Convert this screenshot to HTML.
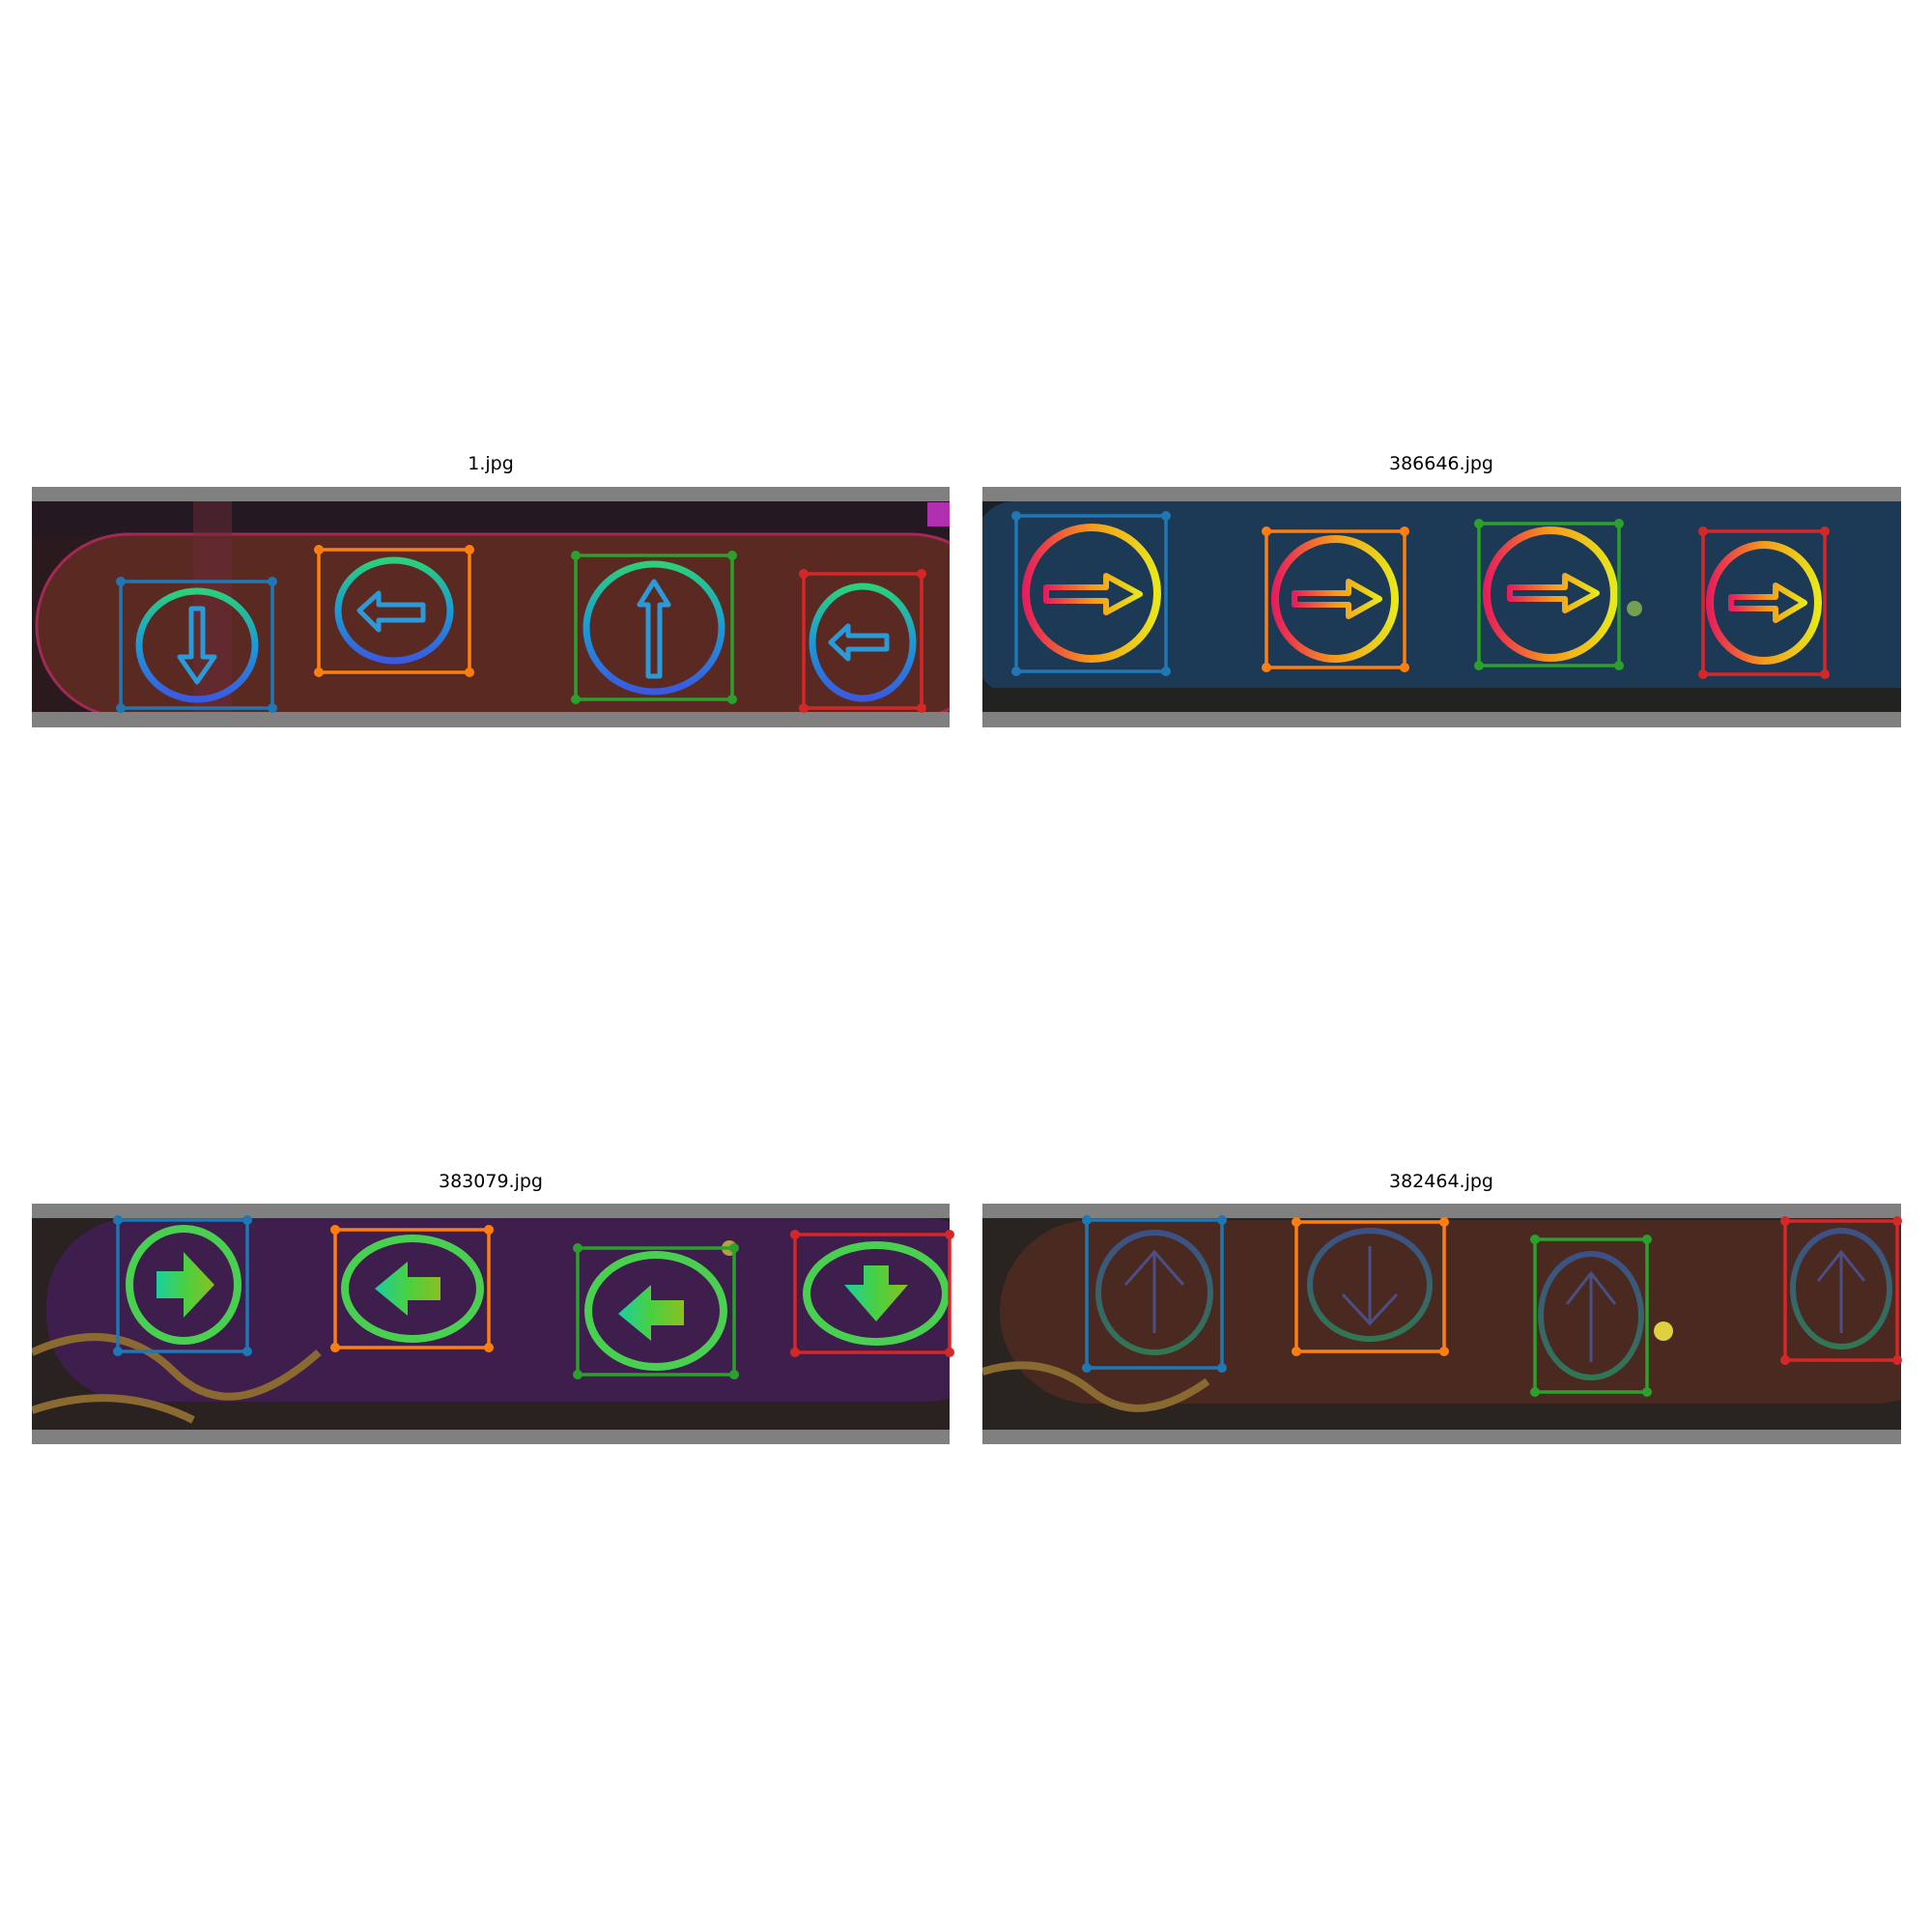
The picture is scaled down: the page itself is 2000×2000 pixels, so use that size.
<!DOCTYPE html>
<html><head><meta charset="utf-8"><style>html,body{margin:0;padding:0;background:#fff}svg{display:block}</style></head><body>
<svg width="2000" height="2000" viewBox="0 0 2000 2000" xmlns="http://www.w3.org/2000/svg" font-family="DejaVu Sans, Liberation Sans, sans-serif">
<defs>
<linearGradient id="gb" x1="0" y1="0" x2="0" y2="1"><stop offset="0" stop-color="#2bd07a"/><stop offset="0.5" stop-color="#1a9ad8"/><stop offset="1" stop-color="#3a5ae0"/></linearGradient>
<linearGradient id="gr" x1="0" y1="0" x2="1" y2="0"><stop offset="0" stop-color="#e81e5a"/><stop offset="0.5" stop-color="#f59a1a"/><stop offset="1" stop-color="#e8e81a"/></linearGradient>
<linearGradient id="gg" x1="0" y1="0" x2="1" y2="0"><stop offset="0" stop-color="#1ad0a0"/><stop offset="0.5" stop-color="#4ad040"/><stop offset="1" stop-color="#8ac020"/></linearGradient>
<linearGradient id="gd" x1="0" y1="0" x2="0" y2="1"><stop offset="0" stop-color="#3a5aa0"/><stop offset="1" stop-color="#2a8a60"/></linearGradient>
<clipPath id="c1"><rect x="33" y="519" width="950" height="218"/></clipPath>
<clipPath id="c2"><rect x="1017" y="519" width="951" height="218"/></clipPath>
<clipPath id="c3"><rect x="33" y="1261" width="950" height="219"/></clipPath>
<clipPath id="c4"><rect x="1017" y="1261" width="951" height="219"/></clipPath>
</defs>
<text x="508" y="486" font-size="19" text-anchor="middle" fill="#000">1.jpg</text>
<text x="1492" y="486" font-size="19" text-anchor="middle" fill="#000">386646.jpg</text>
<text x="508" y="1229" font-size="19" text-anchor="middle" fill="#000">383079.jpg</text>
<text x="1492" y="1229" font-size="19" text-anchor="middle" fill="#000">382464.jpg</text>

<rect x="33" y="504" width="950" height="249" fill="#808080"/>
<g clip-path="url(#c1)">
<rect x="33" y="519" width="950" height="218" fill="#2a1a1e"/>
<rect x="33" y="519" width="950" height="35" fill="#241822"/>
<rect x="38" y="553" width="1000" height="190" rx="95" fill="#5a2a22" stroke="#a02a55" stroke-width="3"/>
<rect x="960" y="520" width="30" height="25" fill="#b030b0"/>
<rect x="200" y="519" width="40" height="218" fill="#6a2a35" opacity="0.5"/>
</g>
<g fill="none" stroke-width="7">
<ellipse cx="204" cy="668" rx="60" ry="56" stroke="url(#gb)"/>
<ellipse cx="408" cy="632" rx="58" ry="52" stroke="url(#gb)"/>
<ellipse cx="677" cy="650" rx="70" ry="66" stroke="url(#gb)"/>
<ellipse cx="893" cy="665" rx="52" ry="58" stroke="url(#gb)"/>
</g>
<g fill="none" stroke="#2a9ad8" stroke-width="5" stroke-linejoin="round">
<path d="M198 630 H210 V680 H222 L204 706 L186 680 H198 Z"/>
<path d="M372 632 L392 614 V626 H438 V642 H392 V652 Z"/>
<path d="M677 602 L692 626 H683 V700 H671 V626 H662 Z"/>
<path d="M860 665 L878 648 V658 H918 V672 H878 V682 Z"/>
</g>
<g fill="none" stroke-width="3.5">
<rect x="125" y="602" width="157" height="131" stroke="#1f77b4"/>
<rect x="330" y="569" width="156" height="127" stroke="#ff7f0e"/>
<rect x="596" y="575" width="162" height="149" stroke="#2ca02c"/>
<rect x="832" y="594" width="122" height="139" stroke="#d62728"/>
</g>
<g fill="#1f77b4"><circle cx="125" cy="602" r="5"/><circle cx="282" cy="602" r="5"/><circle cx="125" cy="733" r="5"/><circle cx="282" cy="733" r="5"/></g>
<g fill="#ff7f0e"><circle cx="330" cy="569" r="5"/><circle cx="486" cy="569" r="5"/><circle cx="330" cy="696" r="5"/><circle cx="486" cy="696" r="5"/></g>
<g fill="#2ca02c"><circle cx="596" cy="575" r="5"/><circle cx="758" cy="575" r="5"/><circle cx="596" cy="724" r="5"/><circle cx="758" cy="724" r="5"/></g>
<g fill="#d62728"><circle cx="832" cy="594" r="5"/><circle cx="954" cy="594" r="5"/><circle cx="832" cy="733" r="5"/><circle cx="954" cy="733" r="5"/></g>

<rect x="1017" y="504" width="951" height="249" fill="#808080"/>
<g clip-path="url(#c2)">
<rect x="1017" y="519" width="951" height="218" fill="#1a2228"/>
<rect x="1010" y="519" width="1000" height="200" rx="40" fill="#1c3a56"/>
<rect x="1017" y="712" width="951" height="25" fill="#222220"/>
</g>
<g fill="none" stroke="url(#gr)" stroke-width="8">
<ellipse cx="1130" cy="614" rx="68" ry="68"/>
<ellipse cx="1382" cy="620" rx="62" ry="62"/>
<ellipse cx="1605" cy="615" rx="66" ry="66"/>
<ellipse cx="1826" cy="624" rx="56" ry="60"/>
</g>
<g fill="none" stroke="url(#gr)" stroke-width="6" stroke-linejoin="round">
<path d="M1083 608 H1145 V596 L1180 615 L1145 634 V622 H1083 Z"/>
<path d="M1340 614 H1396 V602 L1428 620 L1396 638 V626 H1340 Z"/>
<path d="M1563 608 H1620 V596 L1653 614 L1620 632 V620 H1563 Z"/>
<path d="M1792 618 H1838 V606 L1868 624 L1838 642 V630 H1792 Z"/>
</g>
<circle cx="1692" cy="630" r="8" fill="#9acc50" opacity="0.7"/>
<g fill="none" stroke-width="3.5">
<rect x="1052" y="534" width="155" height="161" stroke="#1f77b4"/>
<rect x="1311" y="550" width="143" height="141" stroke="#ff7f0e"/>
<rect x="1531" y="542" width="145" height="147" stroke="#2ca02c"/>
<rect x="1763" y="550" width="126" height="148" stroke="#d62728"/>
</g>
<g fill="#1f77b4"><circle cx="1052" cy="534" r="5"/><circle cx="1207" cy="534" r="5"/><circle cx="1052" cy="695" r="5"/><circle cx="1207" cy="695" r="5"/></g>
<g fill="#ff7f0e"><circle cx="1311" cy="550" r="5"/><circle cx="1454" cy="550" r="5"/><circle cx="1311" cy="691" r="5"/><circle cx="1454" cy="691" r="5"/></g>
<g fill="#2ca02c"><circle cx="1531" cy="542" r="5"/><circle cx="1676" cy="542" r="5"/><circle cx="1531" cy="689" r="5"/><circle cx="1676" cy="689" r="5"/></g>
<g fill="#d62728"><circle cx="1763" cy="550" r="5"/><circle cx="1889" cy="550" r="5"/><circle cx="1763" cy="698" r="5"/><circle cx="1889" cy="698" r="5"/></g>

<rect x="33" y="1246" width="950" height="249" fill="#808080"/>
<g clip-path="url(#c3)">
<rect x="33" y="1261" width="950" height="219" fill="#2a2220"/>
<rect x="48" y="1261" width="1000" height="190" rx="90" fill="#3e1e4c"/>
<path d="M33 1400 Q120 1360 180 1420 T330 1400" stroke="#8a6a30" stroke-width="8" fill="none"/>
<path d="M33 1460 Q120 1430 200 1470" stroke="#8a6a30" stroke-width="8" fill="none"/>
</g>
<g fill="none" stroke="#4ad050" stroke-width="8">
<ellipse cx="190" cy="1330" rx="56" ry="58"/>
<ellipse cx="427" cy="1334" rx="70" ry="52"/>
<ellipse cx="679" cy="1357" rx="70" ry="58"/>
<ellipse cx="907" cy="1339" rx="72" ry="50"/>
</g>
<g fill="url(#gg)">
<path d="M162 1316 H190 V1296 L222 1330 L190 1364 V1344 H162 Z"/>
<path d="M388 1334 L422 1306 V1322 H456 V1346 H422 V1362 Z"/>
<path d="M640 1360 L674 1330 V1346 H708 V1372 H674 V1388 Z"/>
<path d="M894 1310 H920 V1330 H940 L907 1368 L874 1330 H894 Z"/>
</g>
<circle cx="755" cy="1292" r="8" fill="#d0c040" opacity="0.8"/>
<g fill="none" stroke-width="3.5">
<rect x="122" y="1263" width="134" height="136" stroke="#1f77b4"/>
<rect x="347" y="1273" width="159" height="122" stroke="#ff7f0e"/>
<rect x="598" y="1292" width="162" height="131" stroke="#2ca02c"/>
<rect x="823" y="1278" width="160" height="122" stroke="#d62728"/>
</g>
<g fill="#1f77b4"><circle cx="122" cy="1263" r="5"/><circle cx="256" cy="1263" r="5"/><circle cx="122" cy="1399" r="5"/><circle cx="256" cy="1399" r="5"/></g>
<g fill="#ff7f0e"><circle cx="347" cy="1273" r="5"/><circle cx="506" cy="1273" r="5"/><circle cx="347" cy="1395" r="5"/><circle cx="506" cy="1395" r="5"/></g>
<g fill="#2ca02c"><circle cx="598" cy="1292" r="5"/><circle cx="760" cy="1292" r="5"/><circle cx="598" cy="1423" r="5"/><circle cx="760" cy="1423" r="5"/></g>
<g fill="#d62728"><circle cx="823" cy="1278" r="5"/><circle cx="983" cy="1278" r="5"/><circle cx="823" cy="1400" r="5"/><circle cx="983" cy="1400" r="5"/></g>

<rect x="1017" y="1246" width="951" height="249" fill="#808080"/>
<g clip-path="url(#c4)">
<rect x="1017" y="1261" width="951" height="219" fill="#2a2420"/>
<rect x="1035" y="1263" width="1000" height="190" rx="95" fill="#4a2a20"/>
<path d="M1017 1420 Q1080 1400 1130 1440 T1250 1430" stroke="#8a6a30" stroke-width="8" fill="none"/>
</g>
<g fill="none" stroke="url(#gd)" stroke-width="6" opacity="0.8">
<ellipse cx="1195" cy="1338" rx="58" ry="62"/>
<ellipse cx="1418" cy="1330" rx="62" ry="56"/>
<ellipse cx="1647" cy="1362" rx="52" ry="64"/>
<ellipse cx="1906" cy="1334" rx="50" ry="60"/>
</g>
<g fill="none" stroke="#4a5aa0" stroke-width="3" opacity="0.8">
<path d="M1195 1380 V1296 M1165 1330 L1195 1296 L1225 1330"/>
<path d="M1418 1290 V1370 M1390 1340 L1418 1370 L1446 1340"/>
<path d="M1647 1410 V1318 M1622 1350 L1647 1318 L1672 1350"/>
<path d="M1906 1380 V1296 M1882 1326 L1906 1296 L1930 1326"/>
</g>
<circle cx="1722" cy="1378" r="10" fill="#e0d040"/>
<g fill="none" stroke-width="3.5">
<rect x="1125" y="1263" width="140" height="153" stroke="#1f77b4"/>
<rect x="1342" y="1265" width="153" height="134" stroke="#ff7f0e"/>
<rect x="1589" y="1283" width="116" height="158" stroke="#2ca02c"/>
<rect x="1848" y="1264" width="116" height="144" stroke="#d62728"/>
</g>
<g fill="#1f77b4"><circle cx="1125" cy="1263" r="5"/><circle cx="1265" cy="1263" r="5"/><circle cx="1125" cy="1416" r="5"/><circle cx="1265" cy="1416" r="5"/></g>
<g fill="#ff7f0e"><circle cx="1342" cy="1265" r="5"/><circle cx="1495" cy="1265" r="5"/><circle cx="1342" cy="1399" r="5"/><circle cx="1495" cy="1399" r="5"/></g>
<g fill="#2ca02c"><circle cx="1589" cy="1283" r="5"/><circle cx="1705" cy="1283" r="5"/><circle cx="1589" cy="1441" r="5"/><circle cx="1705" cy="1441" r="5"/></g>
<g fill="#d62728"><circle cx="1848" cy="1264" r="5"/><circle cx="1964" cy="1264" r="5"/><circle cx="1848" cy="1408" r="5"/><circle cx="1964" cy="1408" r="5"/></g>
</svg>
</body></html>
